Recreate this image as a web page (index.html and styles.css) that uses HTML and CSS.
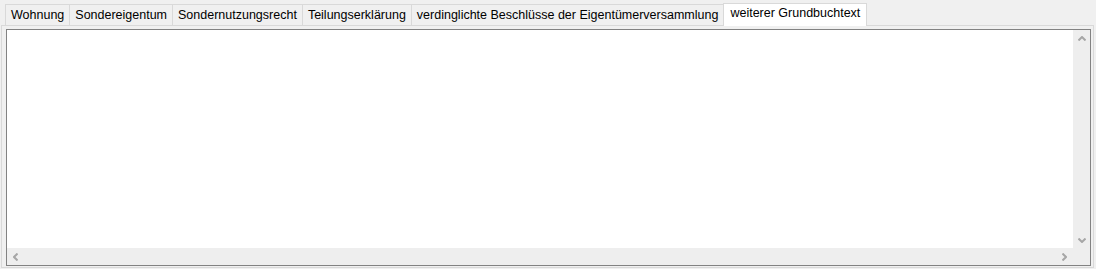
FILE: index.html
```html
<!DOCTYPE html>
<html lang="de">
<head>
    <meta charset="UTF-8">
    <title>Grundbuch</title>
    <link rel="stylesheet" href="styles.css">
</head>
<body>
    <div class="tabs">
        <div class="tab">Wohnung</div>
        <div class="tab">Sondereigentum</div>
        <div class="tab">Sondernutzungsrecht</div>
        <div class="tab">Teilungserklärung</div>
        <div class="tab">verdinglichte Beschlüsse der Eigentümerversammlung</div>
        <div class="tab active">weiterer Grundbuchtext</div>
    </div>
    <div class="panel">
        <div class="editor">
            <div class="text-area"></div>
            <div class="vscroll">
                <svg class="arrow" width="8" height="5" viewBox="0 0 8 5"><polyline points="0.5,4.5 4,1 7.5,4.5"/></svg>
                <svg class="arrow" width="8" height="5" viewBox="0 0 8 5"><polyline points="0.5,0.5 4,4 7.5,0.5"/></svg>
            </div>
            <div class="hscroll">
                <svg class="arrow" width="5" height="8" viewBox="0 0 5 8"><polyline points="4.5,0.5 1,4 4.5,7.5"/></svg>
                <svg class="arrow" width="5" height="8" viewBox="0 0 5 8"><polyline points="0.5,0.5 4,4 0.5,7.5"/></svg>
            </div>
            <div class="corner"></div>
        </div>
    </div>
</body>
</html>
```

FILE: styles.css
```css
html, body {
    height: 100%;
}
body {
    margin: 0;
    background-color: #f0f0f0;
    font-family: 'Liberation Sans', Arial, sans-serif;
    font-size: 12.5px;
    color: #000;
    display: flex;
    flex-direction: column;
}
.tabs {
    display: flex;
    align-items: flex-end;
    padding-left: 5px;
    height: 25px;
}
.tab {
    height: 20px;
    line-height: 20px;
    padding: 0 5px;
    border: 1px solid #d9d9d9;
    border-bottom: none;
    border-left: none;
    background-color: #f0f0f0;
}
.tab:first-child {
    border-left: 1px solid #d9d9d9;
}
.tab.active {
    background-color: #fff;
    height: 22px;
    line-height: 18px;
    padding: 0 6px;
    margin-left: -1px;
    border-left: 1px solid #d9d9d9;
    position: relative;
    top: 1px;
}
.panel {
    flex: 1;
    margin: 0 2px 1px 1px;
    border: 1px solid #d9d9d9;
    padding: 3px 2px 1px 4px;
    display: flex;
}
.editor {
    flex: 1;
    border: 1px solid #828282;
    display: grid;
    grid-template-columns: 1fr 17px;
    grid-template-rows: 1fr 17px;
    background-color: #fff;
}
.vscroll, .hscroll, .corner {
    background-color: #eeeeee;
}
.vscroll {
    display: flex;
    flex-direction: column;
    justify-content: space-between;
    align-items: center;
    padding: 6px 0 5px;
}
.hscroll {
    display: flex;
    justify-content: space-between;
    align-items: center;
    padding: 0 6px 0 6px;
}
.arrow {
    display: block;
    fill: none;
    stroke: #a6a6a6;
    stroke-width: 2;
}
```
